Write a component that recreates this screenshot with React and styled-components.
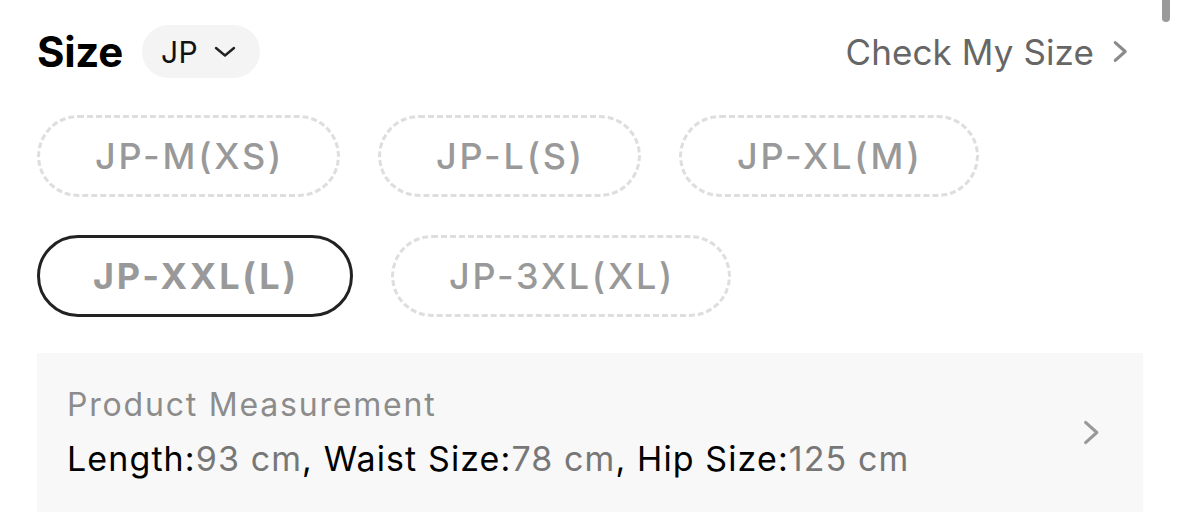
import styled, { createGlobalStyle } from "styled-components";

const GlobalStyle = createGlobalStyle`
  body {
    margin: 0;
    background: #fff;
    font-family: Inter, "Noto Sans", sans-serif;
  }
`;

const sizes = [
  { label: "JP-M(XS)" },
  { label: "JP-L(S)" },
  { label: "JP-XL(M)" },
  { label: "JP-XXL(L)", selected: true },
  { label: "JP-3XL(XL)" },
];

function ChevronRight({ width = 16, height = 22, color = "#888", stroke = 3 }) {
  return (
    <svg width={width} height={height} viewBox="0 0 16 22" fill="none">
      <path
        d="M3 2.5 L12.5 11 L3 19.5"
        stroke={color}
        strokeWidth={stroke}
        strokeLinecap="round"
        strokeLinejoin="round"
      />
    </svg>
  );
}

export default function App() {
  return (
    <Page>
      <GlobalStyle />
      <ScrollThumb />
      <Header>
        <TitleGroup>
          <Title>Size</Title>
          <RegionPill>
            JP
            <svg width="24" height="13" viewBox="0 0 24 13" fill="none">
              <path
                d="M3 3 L12 10.5 L21 3"
                stroke="#222"
                strokeWidth="2.4"
                strokeLinecap="round"
                strokeLinejoin="round"
              />
            </svg>
          </RegionPill>
        </TitleGroup>
        <CheckLink>
          Check My Size
          <ChevronRight width={17} height={23} color="#8a8a8a" stroke={3} />
        </CheckLink>
      </Header>

      <SizeList>
        {sizes.map((s) => (
          <SizeOption key={s.label} $selected={s.selected}>
            {s.label}
          </SizeOption>
        ))}
      </SizeList>

      <MeasureCard>
        <MeasureText>
          <MeasureLabel>Product Measurement</MeasureLabel>
          <MeasureLine>
            Length:<Value>93 cm</Value>, Waist Size:<Value>78 cm</Value>, Hip
            Size:<Value>125 cm</Value>
          </MeasureLine>
        </MeasureText>
        <ChevronRight width={19} height={27} color="#999" stroke={2.6} />
      </MeasureCard>
    </Page>
  );
}

const Page = styled.div`
  position: relative;
  width: 1179px;
  height: 518px;
  box-sizing: border-box;
  padding: 25px 36px 0 37px;
  overflow: hidden;
`;

const ScrollThumb = styled.div`
  position: absolute;
  top: -6px;
  right: 9px;
  width: 8px;
  height: 28px;
  border-radius: 4px;
  background: #9a9a9a;
`;

const Header = styled.div`
  display: flex;
  align-items: center;
  justify-content: space-between;
  height: 53px;
`;

const TitleGroup = styled.div`
  display: flex;
  align-items: center;
  gap: 19px;
`;

const Title = styled.h1`
  margin: 0;
  font-size: 42px;
  font-weight: 700;
  color: #000;
  letter-spacing: -0.3px;
`;

const RegionPill = styled.div`
  display: flex;
  align-items: center;
  gap: 15px;
  height: 53px;
  padding: 0 23px 0 19px;
  border-radius: 27px;
  background: #f4f4f4;
  font-size: 30px;
  color: #111;
  letter-spacing: 0.5px;
`;

const CheckLink = styled.div`
  display: flex;
  align-items: center;
  gap: 18px;
  padding-right: 14px;
  font-size: 35px;
  letter-spacing: 0.1px;
  color: #666;
`;

const SizeList = styled.div`
  display: flex;
  flex-wrap: wrap;
  gap: 38px;
  margin-top: 37px;
  width: 980px;
`;

const SizeOption = styled.div`
  display: flex;
  align-items: center;
  justify-content: center;
  box-sizing: border-box;
  height: 82px;
  padding: 0 ${(p) => (p.$selected ? "51px 0 53px" : "53px 0 55px")};
  border-radius: 41px;
  border: ${(p) => (p.$selected ? "3px solid #222" : "3px dashed #dedede")};
  font-size: 36px;
  font-weight: ${(p) => (p.$selected ? 700 : 500)};
  letter-spacing: 2.8px;
  color: #999;
`;

const MeasureCard = styled.div`
  display: flex;
  align-items: center;
  justify-content: space-between;
  margin-top: 36px;
  height: 159px;
  box-sizing: border-box;
  padding: 0 42px 0 30px;
  background: #f8f8f8;
`;

const MeasureText = styled.div`
  display: flex;
  flex-direction: column;
  gap: 13px;
`;

const MeasureLabel = styled.div`
  font-size: 32px;
  line-height: 40px;
  letter-spacing: 1.8px;
  color: #8c8c8c;
`;

const MeasureLine = styled.div`
  font-size: 34px;
  line-height: 42px;
  letter-spacing: 1.1px;
  color: #000;
`;

const Value = styled.span`
  color: #777;
`;
